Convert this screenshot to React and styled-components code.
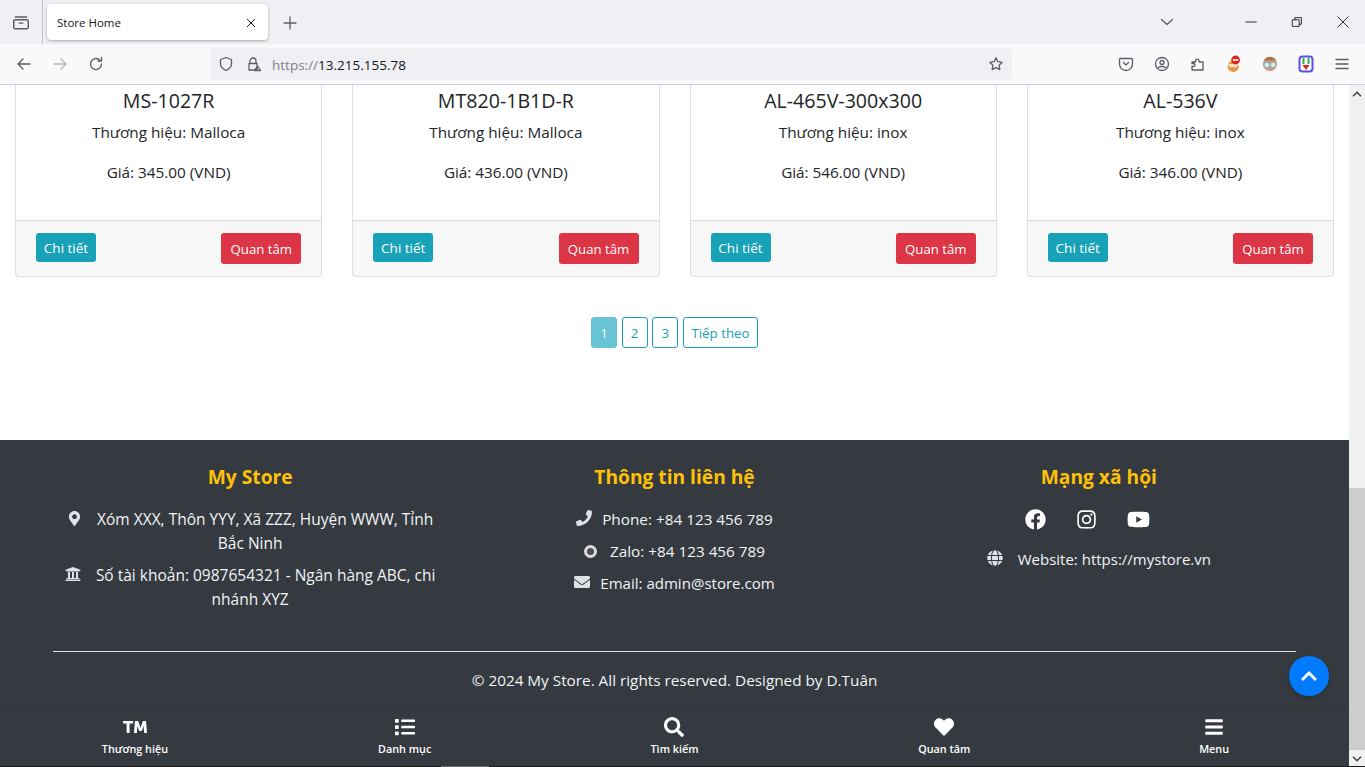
import React from "react"
import styled, {createGlobalStyle} from "styled-components"
import {FaMapMarkerAlt, FaUniversity, FaPhone, FaEnvelope, FaFacebook, FaInstagram, FaYoutube, FaGlobe, FaList, FaSearch, FaHeart, FaBars, FaChevronUp, FaTrademark} from "react-icons/fa"
import {FiChevronDown, FiChevronUp} from "react-icons/fi"

const GlobalStyle = createGlobalStyle`
  html, body {
    margin: 0;
    height: 100%;
    overflow: hidden;
    font-family: "Open Sans", "Noto Sans", sans-serif;
    color: #212529;
  }
  * { box-sizing: border-box; }
`

const Window = styled.div`
  width: 1365px;
  height: 767px;
  display: flex;
  flex-direction: column;
  overflow: hidden;
  position: relative;
`

const TabBar = styled.div`
  height: 44px;
  background: #f0f0f4;
  display: flex;
  align-items: center;
  flex-shrink: 0;
`
const TabSide = styled.div`
  width: 43px;
  height: 44px;
  border-right: 1px solid #c4c4c8;
  display: flex;
  align-items: center;
  justify-content: center;
  color: #5b5b66;
`
const Tab = styled.div`
  margin-left: 4px;
  width: 221px;
  height: 36px;
  background: #fff;
  border-radius: 4px;
  box-shadow: 0 1px 3px rgba(0, 0, 0, .3);
  display: flex;
  align-items: center;
  justify-content: space-between;
  padding: 1px 11px 0 10px;
  font: 11.5px "Open Sans", sans-serif;
  color: #15141a;
`
const NewTab = styled.div`
  margin-left: 14px;
  padding-top: 2px;
  display: flex;
  color: #5b5b66;
`
const TabSpacer = styled.div`
  flex: 1;
`
const WindowButtons = styled.div`
  display: flex;
  align-items: center;
  color: #15141a;
`
const ListAll = styled.div`
  display: flex;
  color: #5b5b66;
  margin-right: 52px;
`
const WinButton = styled.div`
  width: 46px;
  padding-left: 2px;
  display: flex;
  justify-content: center;
`

const Toolbar = styled.div`
  height: 41px;
  background: #f9f9fb;
  border-bottom: 1px solid #cfcfd8;
  display: flex;
  align-items: center;
  flex-shrink: 0;
  color: #5b5b66;
`
const NavIcons = styled.div`
  display: flex;
  gap: 20px;
  padding-left: 16px;
  width: 210px;
`
const ForwardIcon = styled.span`
  display: flex;
  opacity: .4;
`
const UrlBar = styled.div`
  width: 802px;
  height: 32px;
  background: #f0f0f4;
  border-radius: 4px;
  display: flex;
  align-items: center;
  padding: 0 8px;
  gap: 12px;
`
const Url = styled.div`
  flex: 1;
  margin-left: -2px;
  padding-top: 1px;
  font: 13.5px "Open Sans", sans-serif;
  color: #15141a;
  span { color: #7f7f88; }
`
const ExtIcons = styled.div`
  display: flex;
  align-items: center;
  gap: 20px;
  margin-left: 106px;
`
const ExtSlot = styled.div`
  width: 16px;
  display: flex;
  justify-content: center;
`

const Viewport = styled.div`
  flex: 1;
  display: flex;
  min-height: 0;
`
const Page = styled.div`
  flex: 1;
  display: flex;
  flex-direction: column;
  min-width: 0;
`
const Scrollbar = styled.div`
  width: 16px;
  background: #f1f1f1;
  display: flex;
  flex-direction: column;
  color: #505050;
`
const ScrollArrow = styled.div`
  height: 17px;
  display: flex;
  align-items: center;
  justify-content: center;
  flex-shrink: 0;
`
const ScrollGap = styled.div`
  flex: 1;
`
const ScrollThumb = styled.div`
  height: 262px;
  background: #cdcdcd;
`

const CardRow = styled.div`
  display: grid;
  grid-template-columns: repeat(4, 1fr);
  gap: 30px;
  padding: 0 15px;
`
const Card = styled.div`
  height: 192px;
  border: 1px solid rgba(0, 0, 0, .125);
  border-top: 0;
  border-radius: 0 0 4px 4px;
  display: flex;
  flex-direction: column;
  text-align: center;
`
const CardBody = styled.div`
  flex: 1;
`
const CardTitle = styled.div`
  font-size: 19.6px;
  line-height: 24px;
  margin: 4px 0 7px;
`
const CardText = styled.div`
  font-size: 15.3px;
  line-height: 24px;
  margin-bottom: 16px;
`
const CardFooter = styled.div`
  height: 56px;
  background: rgba(0, 0, 0, .03);
  border-top: 1px solid rgba(0, 0, 0, .125);
  display: flex;
  justify-content: space-between;
  align-items: flex-start;
  padding: 12px 20px;
`
const Button = styled.div`
  height: ${p => p.$tall ? 31 : 29}px;
  width: ${p => p.$tall ? 80 : 60}px;
  text-align: center;
  background: ${p => p.$tall ? "#dc3545" : "#17a2b8"};
  color: #fff;
  font-size: ${p => p.$tall ? 13.2 : 13.5}px;
  line-height: ${p => p.$tall ? 33 : 30}px;
  border-radius: 3px;
`

const Pagination = styled.div`
  display: flex;
  justify-content: center;
  gap: 4.67px;
  margin-top: 40px;
`
const PageItem = styled.div`
  height: 31px;
  min-width: ${p => p.$wide ? 75 : 26}px;
  border: 1px solid #17a2b8;
  border-radius: 3px;
  background: ${p => p.$active ? "#68c4d2" : "#fff"};
  border-color: ${p => p.$active ? "#68c4d2" : "#17a2b8"};
  color: ${p => p.$active ? "#fff" : "#17a2b8"};
  font-size: 13.3px;
  display: flex;
  align-items: center;
  justify-content: center;
`

const Footer = styled.div`
  margin-top: 92px;
  flex: 1;
  background: #343a40;
  color: #f1f3f5;
  display: flex;
  flex-direction: column;
  min-height: 0;
`
const FooterCols = styled.div`
  display: grid;
  grid-template-columns: repeat(3, 1fr);
  padding: 22px 38px 0;
  height: 211px;
`
const FooterCol = styled.div`
  padding: 0 15px;
  display: flex;
  flex-direction: column;
  align-items: center;
`
const FooterTitle = styled.div`
  font-size: 19.2px;
  line-height: 30px;
  font-weight: 700;
  color: #ffc107;
  margin-bottom: 15px;
`
const InfoLine = styled.div`
  font-size: ${p => p.$size || 15.3}px;
  line-height: 24px;
  margin-bottom: 8px;
  text-align: center;
  width: ${p => p.$wrap ? "376px" : "auto"};
  svg {
    vertical-align: -1px;
    margin-right: ${p => p.$gap || 10}px;
    color: #dee2e6;
  }
`
const ZaloDot = styled.span`
  display: inline-block;
  width: 13px;
  height: 13px;
  border-radius: 50%;
  background: #dcdcdc;
  border: 3px solid #dcdcdc;
  margin-right: 13px;
  vertical-align: -1px;
  &::after {
    content: "";
    display: block;
    width: 7px;
    height: 7px;
    border-radius: 50%;
    background: #4a5056;
  }
`
const Socials = styled.div`
  display: flex;
  gap: 30px;
  color: #fff;
  margin-bottom: 16px;
  padding-right: 22px;
  height: 24px;
  align-items: center;
`
const Rule = styled.div`
  height: 1px;
  background: #dee2e6;
  margin: 0 53px;
  width: 1243px;
`
const Copyright = styled.div`
  text-align: center;
  font-size: 15.3px;
  line-height: 24px;
  padding-top: 16px;
  height: 55px;
`
const BottomNav = styled.div`
  height: 60px;
  background: #343a40;
  box-shadow: 0 -1px 2px rgba(0, 0, 0, .08);
  display: grid;
  grid-template-columns: repeat(5, 1fr);
  flex-shrink: 0;
`
const NavItem = styled.div`
  display: flex;
  flex-direction: column;
  align-items: center;
  color: #fff;
  padding-top: 10px;
`
const NavIcon = styled.div`
  height: 20px;
  display: flex;
  align-items: center;
`
const NavLabel = styled.div`
  font-size: 10.8px;
  font-weight: 600;
  line-height: 14px;
  margin-top: 5px;
`
const ToTop = styled.div`
  position: absolute;
  left: 1289px;
  top: 656px;
  width: 40px;
  height: 40px;
  border-radius: 50%;
  background: #007bff;
  color: #fff;
  display: flex;
  align-items: center;
  justify-content: center;
  box-shadow: 0 2px 5px rgba(0, 0, 0, .2);
`
const BottomEdge = styled.div`
  position: absolute;
  left: 0;
  right: 0;
  bottom: 0;
  height: 1px;
  background: #1c1c1e;
  &::after {
    content: "";
    position: absolute;
    left: 441px;
    width: 48px;
    height: 1px;
    background: #6a6a6a;
  }
`

const products = [
  {name: "MS-1027R", brand: "Malloca", price: "345.00"},
  {name: "MT820-1B1D-R", brand: "Malloca", price: "436.00"},
  {name: "AL-465V-300x300", brand: "inox", price: "546.00"},
  {name: "AL-536V", brand: "inox", price: "346.00"},
]

const ProductCard = ({name, brand, price}) => (
  <Card>
    <CardBody>
      <CardTitle>{name}</CardTitle>
      <CardText>Thương hiệu: {brand}</CardText>
      <CardText>Giá: {price} (VND)</CardText>
    </CardBody>
    <CardFooter>
      <Button>Chi tiết</Button>
      <Button $tall>Quan tâm</Button>
    </CardFooter>
  </Card>
)

const Line = ({d, size = 16, w = 1.3}) => (
  <svg width={size} height={size} viewBox="0 0 16 16" fill="none" stroke="currentColor" strokeWidth={w} strokeLinecap="round" strokeLinejoin="round">
    <path d={d}/>
  </svg>
)

const Browser = () => (
  <>
    <TabBar>
      <TabSide><Line size={18} d="M3 6h10a1.5 1.5 0 0 1 1.5 1.500v5A1.500 1.500 0 0 1 13 14H3a1.500 1.500 0 0 1-1.500-1.500v-5A1.500 1.500 0 0 1 3 6zM3 3.500h10M6.500 9h3"/></TabSide>
      <Tab>
        Store Home
        <Line size={12} d="M3 3l10 10M13 3L3 13"/>
      </Tab>
      <NewTab><Line d="M8 2v12M2 8h12"/></NewTab>
      <TabSpacer/>
      <ListAll><Line d="M2.500 5.500L8 10.500l5.500-5"/></ListAll>
      <WindowButtons>
        <WinButton><Line size={14} w={1} d="M2 8h12"/></WinButton>
        <WinButton><Line size={14} w={1} d="M3 5.500h7.500V13H3zM5.500 5.500V3H13v7.500h-2.500"/></WinButton>
        <WinButton><Line size={14} w={1} d="M2 2l12 12M14 2L2 14"/></WinButton>
      </WindowButtons>
    </TabBar>
    <Toolbar>
      <NavIcons>
        <Line d="M14 8H2M7 3L2 8l5 5"/>
        <ForwardIcon><Line d="M2 8h12M9 3l5 5-5 5"/></ForwardIcon>
        <Line d="M13.500 8A5.500 5.500 0 1 1 11.500 3.800M13.500 1.500v3.500H10"/>
      </NavIcons>
      <UrlBar>
        <Line d="M8 1.500l5.500 2v4.500c0 3-2.500 5-5.500 6.500C5 13 2.500 11 2.500 8V3.500z"/>
        <Line d="M4 7.500V5a3 3 0 0 1 6 0v2.500M3 7.500h8V14H3zM11.500 10l3 4.500h-6z"/>
        <Url><span>https://</span>13.215.155.78</Url>
        <Line d="M8 1.800l1.900 3.900 4.300.6-3.100 3 .7 4.300L8 11.600l-3.800 2 .7-4.300-3.100-3 4.300-.6z"/>
      </UrlBar>
      <ExtIcons>
        <ExtSlot><Line d="M2.500 2.500h11a1 1 0 0 1 1 1V8a6.500 6.500 0 0 1-13 0V3.500a1 1 0 0 1 1-1zM5.500 6.500L8 9l2.500-2.500"/></ExtSlot>
        <ExtSlot><Line d="M8 1.500a6.500 6.500 0 1 0 0 13 6.500 6.500 0 0 0 0-13zM8 4.500a2 2 0 1 0 0 4 2 2 0 0 0 0-4zM4 12c1-2 7-2 8 0"/></ExtSlot>
        <ExtSlot><Line d="M2 6h3.500V4.500a1.800 1.800 0 0 1 3.500 0V6H13v8H2v-3.500h1.500a1.500 1.500 0 0 0 0-3H2z"/></ExtSlot>
        <ExtSlot>
          <svg width="20" height="22" viewBox="0 0 20 22">
            <circle cx="9" cy="14" r="7" fill="#e8963c"/>
            <path d="M2 11h14l-3 4H5z" fill="#fff" opacity=".75"/>
            <circle cx="12" cy="6" r="5.500" fill="#e2231a"/>
            <rect x="8.500" y="5" width="7" height="2" fill="#fff"/>
          </svg>
        </ExtSlot>
        <ExtSlot>
          <svg width="18" height="18" viewBox="0 0 18 18">
            <circle cx="9" cy="9" r="8" fill="#c79a7c"/>
            <path d="M2 5a8 8 0 0 1 14 0z" fill="#a8794f"/>
            <circle cx="5.500" cy="10" r="3" fill="#d8eef0" stroke="#7fb6bd"/>
            <circle cx="12.500" cy="10" r="3" fill="#d8eef0" stroke="#7fb6bd"/>
          </svg>
        </ExtSlot>
        <ExtSlot>
          <svg width="16" height="18" viewBox="0 0 16 18">
            <rect x="1.500" y="1.500" width="13" height="15" rx="3" fill="#fff" stroke="#5b50e8" strokeWidth="2"/>
            <rect x="4.500" y="3" width="2" height="6" fill="#2fae4e"/>
            <rect x="9.500" y="3" width="2" height="6" fill="#2fae4e"/>
            <path d="M4.500 10h7L8 15z" fill="#e2231a"/>
          </svg>
        </ExtSlot>
        <ExtSlot><Line d="M2 3.500h12M2 8h12M2 12.500h12"/></ExtSlot>
      </ExtIcons>
    </Toolbar>
  </>
)

const navItems = [
  {icon: <FaTrademark size={24}/>, label: "Thương hiệu"},
  {icon: <FaList size={20}/>, label: "Danh mục"},
  {icon: <FaSearch size={20}/>, label: "Tìm kiếm"},
  {icon: <FaHeart size={20}/>, label: "Quan tâm"},
  {icon: <FaBars size={20}/>, label: "Menu"},
]

const App = () => (
  <Window>
    <GlobalStyle/>
    <Browser/>
    <Viewport>
      <Page>
        <CardRow>
          {products.map(p => <ProductCard key={p.name} {...p}/>)}
        </CardRow>
        <Pagination>
          <PageItem $active>1</PageItem>
          <PageItem>2</PageItem>
          <PageItem>3</PageItem>
          <PageItem $wide>Tiếp theo</PageItem>
        </Pagination>
        <Footer>
          <FooterCols>
            <FooterCol>
              <FooterTitle>My Store</FooterTitle>
              <InfoLine $wrap $size={15.5} $gap={15}><FaMapMarkerAlt size={15}/>Xóm XXX, Thôn YYY, Xã ZZZ, Huyện WWW, Tỉnh Bắc Ninh</InfoLine>
              <InfoLine $wrap $size={15.5} $gap={15}><FaUniversity size={16}/>Số tài khoản: 0987654321 - Ngân hàng ABC, chi nhánh XYZ</InfoLine>
            </FooterCol>
            <FooterCol>
              <FooterTitle>Thông tin liên hệ</FooterTitle>
              <InfoLine><FaPhone size={16}/>Phone: +84 123 456 789</InfoLine>
              <InfoLine><ZaloDot/>Zalo: +84 123 456 789</InfoLine>
              <InfoLine $size={15.05}><FaEnvelope size={16}/>Email: admin@store.com</InfoLine>
            </FooterCol>
            <FooterCol>
              <FooterTitle>Mạng xã hội</FooterTitle>
              <Socials>
                <FaFacebook size={21}/>
                <FaInstagram size={21}/>
                <FaYoutube size={23}/>
              </Socials>
              <InfoLine $size={15} $gap={15}><FaGlobe size={16}/>Website: https://mystore.vn</InfoLine>
            </FooterCol>
          </FooterCols>
          <Rule/>
          <Copyright>© 2024 My Store. All rights reserved. Designed by D.Tuân</Copyright>
          <BottomNav>
            {navItems.map(item => (
              <NavItem key={item.label}>
                <NavIcon>{item.icon}</NavIcon>
                <NavLabel>{item.label}</NavLabel>
              </NavItem>
            ))}
          </BottomNav>
        </Footer>
      </Page>
      <Scrollbar>
        <ScrollArrow><FiChevronUp size={14} strokeWidth={3}/></ScrollArrow>
        <ScrollGap/>
        <ScrollThumb/>
        <ScrollArrow><FiChevronDown size={14} strokeWidth={3}/></ScrollArrow>
      </Scrollbar>
    </Viewport>
    <ToTop><FaChevronUp size={18}/></ToTop>
    <BottomEdge/>
  </Window>
)

export default App
